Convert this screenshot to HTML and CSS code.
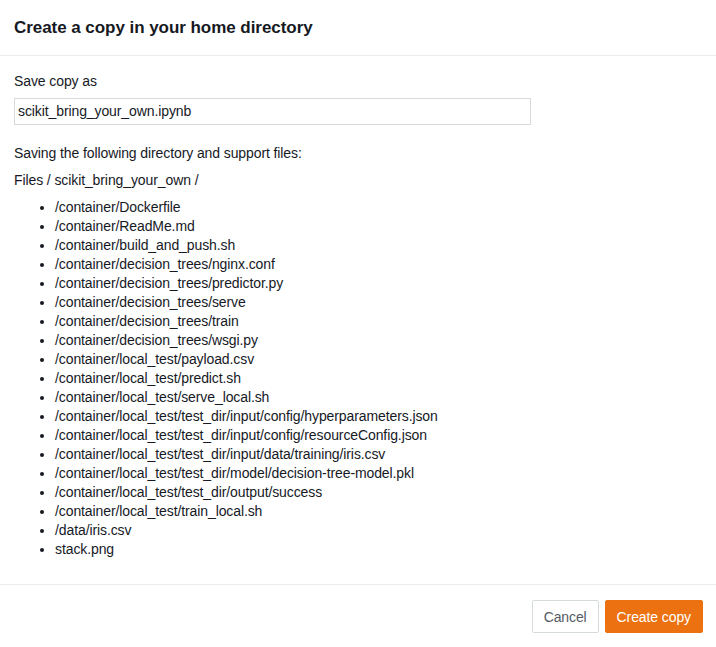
FILE: index.html
```html
<!DOCTYPE html>
<html>
<head>
<meta charset="utf-8">
<link rel="stylesheet" href="styles.css">
</head>
<body>
<div class="dialog">
  <div class="header"><h1 class="title">Create a copy in your home directory</h1></div>
  <div class="body">
    <label class="label">Save copy as</label>
    <div class="input">scikit_bring_your_own.ipynb</div>
    <p class="desc">Saving the following directory and support files:</p>
    <p class="path">Files / scikit_bring_your_own /</p>
    <ul class="files">
      <li>/container/Dockerfile</li>
      <li>/container/ReadMe.md</li>
      <li>/container/build_and_push.sh</li>
      <li>/container/decision_trees/nginx.conf</li>
      <li>/container/decision_trees/predictor.py</li>
      <li>/container/decision_trees/serve</li>
      <li>/container/decision_trees/train</li>
      <li>/container/decision_trees/wsgi.py</li>
      <li>/container/local_test/payload.csv</li>
      <li>/container/local_test/predict.sh</li>
      <li>/container/local_test/serve_local.sh</li>
      <li>/container/local_test/test_dir/input/config/hyperparameters.json</li>
      <li>/container/local_test/test_dir/input/config/resourceConfig.json</li>
      <li>/container/local_test/test_dir/input/data/training/iris.csv</li>
      <li>/container/local_test/test_dir/model/decision-tree-model.pkl</li>
      <li>/container/local_test/test_dir/output/success</li>
      <li>/container/local_test/train_local.sh</li>
      <li>/data/iris.csv</li>
      <li>stack.png</li>
    </ul>
  </div>
  <div class="footer">
    <button class="btn btn-cancel">Cancel</button>
    <button class="btn btn-primary">Create copy</button>
  </div>
</div>
</body>
</html>
```
FILE: styles.css
```css
* { box-sizing: border-box; }
html, body { margin: 0; padding: 0; background: #fff; }
body {
  font-family: "Liberation Sans", Arial, sans-serif;
  color: #16191f;
  font-size: 14px;
  letter-spacing: -0.1px;
}
.dialog { width: 716px; }
.header {
  height: 56px;
  padding: 1px 14px 0;
  display: flex;
  align-items: center;
  border-bottom: 1px solid #eaeded;
}
.title {
  margin: 0;
  font-size: 17px;
  font-weight: bold;
  letter-spacing: -0.05px;
}
.body {
  padding: 16px 14px 25px;
  border-bottom: 1px solid #eaeded;
}
.label { display: block; line-height: 18px; margin-bottom: 8px; }
.input {
  width: 517px;
  height: 27px;
  border: 1px solid #d5dbdb;
  padding: 0 3px;
  line-height: 25px;
}
.desc { margin: 19px 0 0; line-height: 18px; }
.path { margin: 9px 0 0; line-height: 18px; }
.files {
  margin: 9px 0 0;
  padding-left: 41px;
  line-height: 19px;
}
.footer {
  display: flex;
  justify-content: flex-end;
  gap: 6px;
  padding: 15px 13px 14px;
}
.btn {
  font-family: inherit;
  font-size: 14px;
  letter-spacing: -0.1px;
  height: 33px;
  border-radius: 2px;
  padding: 0 11px;
  cursor: pointer;
}
.btn-cancel {
  background: #fff;
  border: 1px solid #d5dbdb;
  color: #545b64;
}
.btn-primary {
  background: #ec7211;
  border: 1px solid #ec7211;
  color: #fff;
}
```
